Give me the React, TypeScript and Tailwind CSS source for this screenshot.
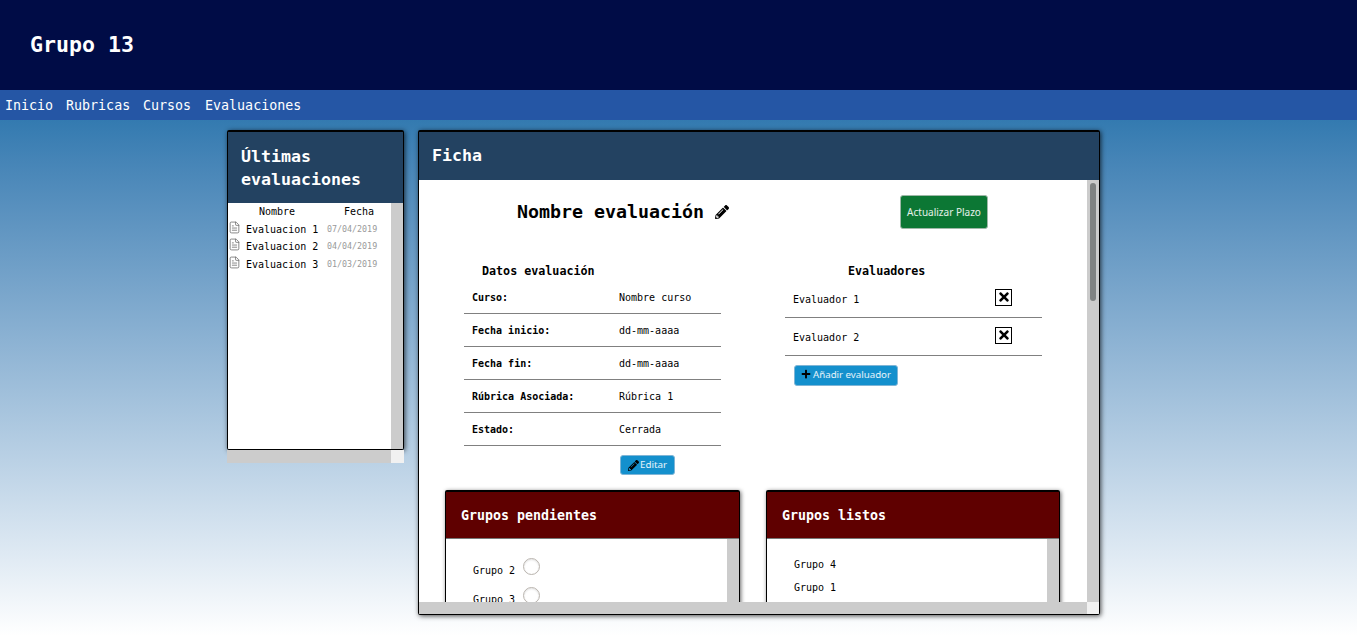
import { FileText } from 'lucide-react';
import { FaPencilAlt, FaPlus, FaTimes } from 'react-icons/fa';

const evaluaciones = [
    { nombre: 'Evaluacion 1', fecha: '07/04/2019', row: 'h-[18px]' },
    { nombre: 'Evaluacion 2', fecha: '04/04/2019', row: 'h-[17px]' },
    { nombre: 'Evaluacion 3', fecha: '01/03/2019', row: 'h-[18px]' },
];

const datos = [
    ['Curso:', 'Nombre curso'],
    ['Fecha inicio:', 'dd-mm-aaaa'],
    ['Fecha fin:', 'dd-mm-aaaa'],
    ['Rúbrica Asociada:', 'Rúbrica 1'],
    ['Estado:', 'Cerrada'],
];

const evaluadores = [
    { name: 'Evaluador 1', row: 'h-[37px]' },
    { name: 'Evaluador 2', row: 'h-[38px] pt-[1px]' },
];

const navItems = [
    { label: 'Inicio', className: 'w-[61px]' },
    { label: 'Rubricas', className: 'w-[77px]' },
    { label: 'Cursos', className: 'w-[62px]' },
    { label: 'Evaluaciones', className: '' },
];

function Radio() {
    return <span className="block w-[17px] h-[17px] rounded-full bg-white border border-[#b9b4ae] shadow-[inset_0_1px_2px_rgba(0,0,0,0.12)]" />;
}

function GrupoCard({ title, width, children }: { title: string; width: string; children: React.ReactNode }) {
    return (
        <div className={`${width} h-[130px] shrink-0 flex flex-col border border-t-2 border-black rounded-[2px] shadow-[1px_1px_4px_rgba(0,0,0,0.6)] overflow-hidden`}>
            <div className="h-[47px] shrink-0 flex items-center pl-[15px] pt-[2px] bg-[#5f0000] border-b border-[#777] text-white font-bold text-[13.3px]">
                {title}
            </div>
            <div className="flex-1 flex min-h-0">
                <div className="flex-1 bg-white overflow-hidden">{children}</div>
                <div className="w-[12px] bg-[#cccccc]" />
            </div>
        </div>
    );
}

export default function App() {
    return (
        <div className="h-[636px] w-[1357px] overflow-hidden flex flex-col font-['DejaVu_Sans_Mono',monospace] text-black">
            <header className="h-[90px] shrink-0 flex items-center pl-[30px] bg-[#000c46] text-white font-bold text-[21.6px]">
                Grupo 13
            </header>
            <nav className="h-[30px] shrink-0 flex items-center pl-[5px] pt-[1px] bg-[#2556a5] text-white text-[13.33px]">
                {navItems.map((item) => (
                    <span key={item.label} className={item.className}>
                        {item.label}
                    </span>
                ))}
            </nav>

            <main className="flex-1 flex items-start gap-[14px] pl-[227px] pt-[10px] bg-gradient-to-b from-[#337ab0] to-[#ffffff]">
                {/* Últimas evaluaciones */}
                <div className="w-[177px] shrink-0 flex flex-col">
                    <div className="h-[320px] flex flex-col border border-t-2 border-black rounded-[2px] shadow-[1px_1px_5px_rgba(0,0,0,0.7)] overflow-hidden">
                        <div className="h-[71px] shrink-0 flex items-center pl-[13px] bg-[#234261] text-white font-bold text-[16.6px] leading-[23px]">
                            <span>
                                Últimas
                                <br />
                                evaluaciones
                            </span>
                        </div>
                        <div className="flex-1 flex min-h-0">
                            <div className="flex-1 bg-white pl-px">
                                <div className="h-[17px] flex items-center text-[10px]">
                                    <span className="pl-[30px] w-[115px]">Nombre</span>
                                    <span>Fecha</span>
                                </div>
                                {evaluaciones.map((e) => (
                                    <div key={e.nombre} className={`${e.row} flex items-center text-[10px]`}>
                                        <FileText size={13} strokeWidth={1.4} className="shrink-0 text-[#666] -mt-[4px] -ml-px" />
                                        <span className="ml-[5px] w-[81px] shrink-0">{e.nombre}</span>
                                        <span className="text-[8.33px] text-[#999]">{e.fecha}</span>
                                    </div>
                                ))}
                            </div>
                            <div className="w-[12px] bg-[#cccccc]" />
                        </div>
                    </div>
                    <div className="h-[13px] flex">
                        <div className="flex-1 bg-[#cccccc]" />
                        <div className="w-[13px] bg-[#f1f1f1]" />
                    </div>
                </div>

                {/* Ficha */}
                <div className="w-[682px] h-[485px] shrink-0 flex flex-col border border-t-2 border-black rounded-[2px] shadow-[1px_1px_5px_rgba(0,0,0,0.7)] overflow-hidden">
                    <div className="h-[48px] shrink-0 flex items-center pl-[13px] pt-[1px] bg-[#234261] text-white font-bold text-[16.6px]">
                        Ficha
                    </div>
                    <div className="flex-1 flex min-h-0">
                        <div className="flex-1 bg-white overflow-hidden">
                            <div className="h-[82px] flex items-start">
                                <div className="w-[481px] pl-[98px] pt-[21px] flex items-center gap-[11px]">
                                    <span className="font-bold text-[18.3px] leading-[22px]">Nombre evaluación</span>
                                    <FaPencilAlt size={14} />
                                </div>
                                <button className="mt-[15px] w-[88px] h-[34px] rounded-[3px] bg-[#0c7734] border border-[#9fb8a8] text-white/90 font-['Noto_Sans',sans-serif] text-[10px]">
                                    Actualizar Plazo
                                </button>
                            </div>

                            <div className="flex pl-[45px] gap-[64px]">
                                <section className="w-[257px]">
                                    <h3 className="h-[19px] pl-[18px] pt-[1px] flex items-center font-bold text-[11.7px]">Datos evaluación</h3>
                                    {datos.map(([label, value]) => (
                                        <div key={label} className="h-[33px] flex items-center pl-[8px] border-b border-[#808080] text-[10px]">
                                            <span className="w-[147px] font-bold">{label}</span>
                                            <span>{value}</span>
                                        </div>
                                    ))}
                                    <div className="pl-[156px] pt-[9px]">
                                        <button className="w-[55px] h-[20px] flex items-center justify-center gap-[1px] rounded-[3px] bg-[#1490cd] border border-[#7fb5d6] text-white/90 font-['Noto_Sans',sans-serif] text-[9.8px]">
                                            <FaPencilAlt size={11} className="text-black" />
                                            Editar
                                        </button>
                                    </div>
                                </section>

                                <section className="w-[257px]">
                                    <h3 className="h-[19px] pl-[63px] pt-[1px] flex items-center font-bold text-[11.7px]">Evaluadores</h3>
                                    {evaluadores.map((ev) => (
                                        <div key={ev.name} className={`${ev.row} flex items-center pl-[8px] border-b border-[#808080] text-[10px]`}>
                                            <span className="w-[202px]">{ev.name}</span>
                                            <span className="w-[17px] h-[17px] -mt-[4px] flex items-center justify-center bg-white border border-black">
                                                <FaTimes size={14} />
                                            </span>
                                        </div>
                                    ))}
                                    <div className="pl-[9px] pt-[9px]">
                                        <button className="w-[104px] h-[21px] flex items-center justify-center gap-[2px] rounded-[3px] bg-[#1490cd] border border-[#7fb5d6] text-white/90 font-['Noto_Sans',sans-serif] text-[9.7px]">
                                            <FaPlus size={10} className="text-black -mt-[3px]" />
                                            Añadir evaluador
                                        </button>
                                    </div>
                                </section>
                            </div>

                            <div className="flex pl-[26px] gap-[26px] mt-[15px]">
                                <GrupoCard title="Grupos pendientes" width="w-[295px]">
                                    <div className="pl-[27px] pt-[19px] text-[10px]">
                                        {['Grupo 2', 'Grupo 3'].map((g) => (
                                            <div key={g} className="h-[29px] flex items-start">
                                                <span className="w-[50px] pt-[5px]">{g}</span>
                                                <Radio />
                                            </div>
                                        ))}
                                    </div>
                                </GrupoCard>
                                <GrupoCard title="Grupos listos" width="w-[294px]">
                                    <div className="pl-[27px] pt-[14px] text-[10px]">
                                        {['Grupo 4', 'Grupo 1'].map((g) => (
                                            <div key={g} className="h-[23px] flex items-center">
                                                {g}
                                            </div>
                                        ))}
                                    </div>
                                </GrupoCard>
                            </div>
                        </div>
                        <div className="w-[12px] shrink-0 bg-[#cccccc] px-[3px] pt-[3px]">
                            <div className="h-[118px] rounded-full bg-[#7f8282]" />
                        </div>
                    </div>
                    <div className="h-[12px] shrink-0 flex">
                        <div className="flex-1 bg-[#cccccc]" />
                        <div className="w-[12px] bg-[#f1f1f1]" />
                    </div>
                </div>
            </main>
        </div>
    );
}
